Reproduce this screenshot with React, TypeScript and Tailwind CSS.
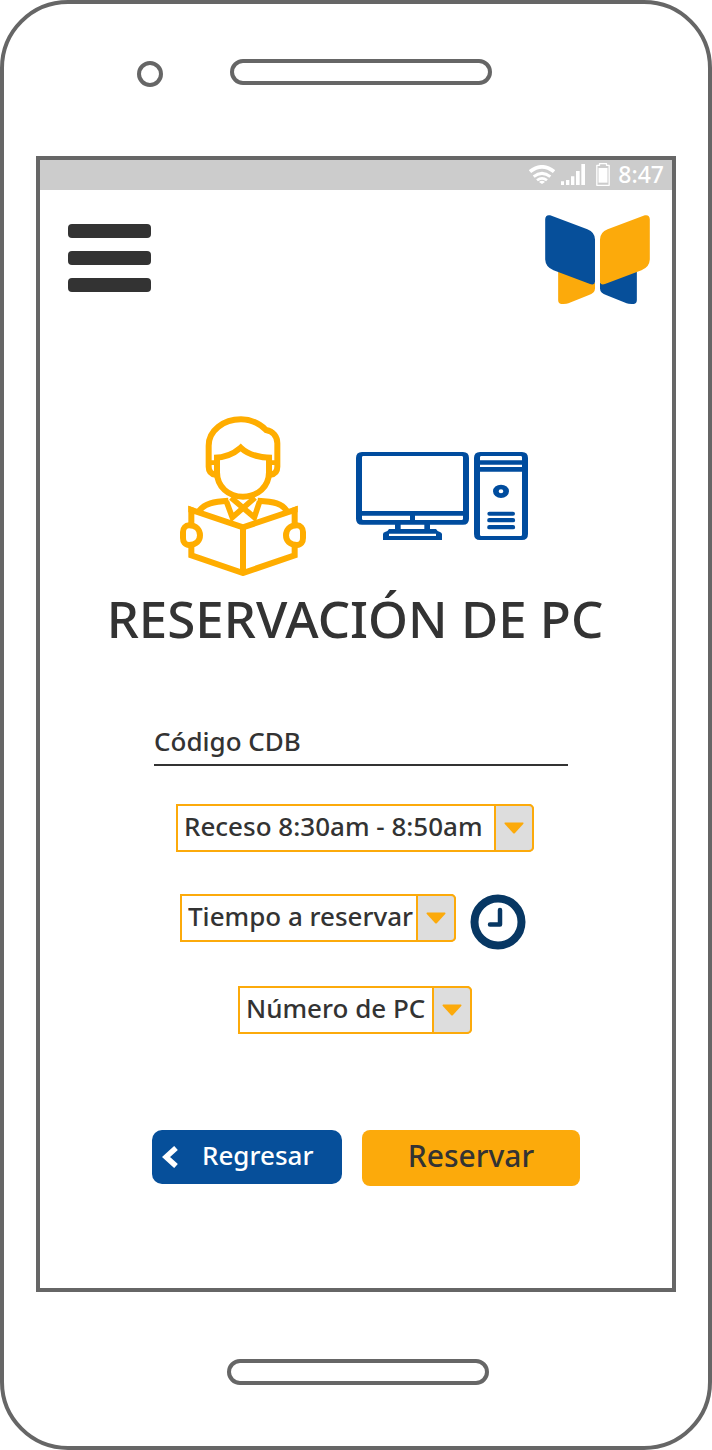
import React from "react";

function WifiIcon() {
  return (
    <svg viewBox="83 42 78 57" className="h-[19px] w-[26px]" fill="none" stroke="#fff" strokeWidth="11" aria-hidden="true">
      <path d="M86 62Q122 33 158 62" />
      <path d="M97 77Q122 57 147 77" strokeWidth="9" />
      <path d="M107 88Q122 76 137 88" strokeWidth="8" />
      <path d="M113 93Q122 86 131 93L122 99Z" fill="#fff" stroke="none" />
    </svg>
  );
}

function SignalIcon() {
  return (
    <svg viewBox="180 42 72 63" className="h-[21px] w-6" fill="#fff" aria-hidden="true">
      <path d="M180 94h9v11h-9zM195 90h10v15h-10zM210 79h10v26h-10zM225 63h11v42h-11zM241 42h11v63h-11z" />
    </svg>
  );
}

function BatteryIcon() {
  return (
    <svg viewBox="286 39 41 69" className="h-[23px] w-[14px]" aria-hidden="true">
      <path d="M296 41h21v5h8v60h-37V46h8z" fill="none" stroke="#fff" strokeWidth="4" strokeLinejoin="round" />
      <path d="M293 54h27v44h-27z" fill="#fff" />
    </svg>
  );
}

function LogoWing({ upper, lower }: { upper: string; lower: string }) {
  return (
    <>
      <path d="M174 360L285 398V415Q285 428 265 436L205 460Q200 462 190 462H183Q174 460 174 450Z" fill={lower} />
      <path d="M135 207Q136 192 150 195L262 237Q285 246 285 268V394Q284 406 270 402L160 360Q136 351 135 328Z" fill={upper} />
    </>
  );
}

function Logo() {
  return (
    <svg viewBox="135 194 315 268" className="h-[89px] w-[105px]" role="img" aria-label="Biblioteca">
      <LogoWing upper="#064f9a" lower="#fcaa0b" />
      <g transform="translate(585 0) scale(-1 1)">
        <LogoWing upper="#fcaa0b" lower="#064f9a" />
      </g>
    </svg>
  );
}

function ReaderIcon() {
  return (
    <svg viewBox="45 46 381 480" className="h-40 w-[127px]" fill="none" stroke="#ffad00" strokeWidth="18" aria-hidden="true">
      <path d="M152 222C138 220 131 212 131 198V135C131 90 175 56 228 56C258 56 283 68 303 88C325 92 337 108 337 128V198C337 212 330 220 316 222" />
      <path d="M156 163V215C156 258 190 288 234 288C278 288 312 258 312 215V163" />
      <path d="M147 171C180 171 205 160 227 141C250 163 285 171 321 171" />
      <path d="M138 186H156M312 186H330" strokeWidth="14" />
      <path d="M184 302L202 350L270 291M284 302L268 350L198 291" strokeWidth="17" />
      <path d="M103 330C120 308 145 303 190 300M278 300C330 303 350 308 365 330" />
      <path d="M79 376V328L234 380L389 328V376" />
      <path d="M70 315L88 322V335H70ZM398 315L380 322V335H398Z" fill="#ffad00" stroke="none" />
      <path d="M79 430V464L234 517L389 464V430M234 380V517" />
      <path d="M72 374C94 374 105 388 105 404C105 420 94 433 72 433C60 433 54 424 54 412V394C54 382 62 374 72 374Z" />
      <path d="M396 374C374 374 363 388 363 404C363 420 374 433 396 433C408 433 414 424 414 412V394C414 382 406 374 396 374Z" />
    </svg>
  );
}

function ComputerIcon() {
  return (
    <svg viewBox="48 39 516 264" className="h-[88px] w-[172px]" fill="#004c9e" fillRule="evenodd" aria-hidden="true">
      <path d="M66 39H369Q387 39 387 57V239Q387 257 369 257H66Q48 257 48 239V57Q48 39 66 39ZM70 51Q66 51 66 55V216H369V55Q369 51 365 51ZM66 230V239Q66 243 70 243H365Q369 243 369 239V230Z" />
      <path d="M210 228H225V245H210ZM165 255H182V272H165ZM253 255H270V272H253Z" />
      <path d="M147 270H288Q292 278 300 279Q306 281 306 286V303H129V286Q129 280 135 279Q143 278 147 270ZM147 284V291H288V284Z" />
      <path d="M420 39H546Q564 39 564 57V285Q564 303 546 303H420Q402 303 402 285V57Q402 39 420 39ZM424 51Q420 51 420 55V64H546V55Q546 51 542 51ZM420 77V84H546V77ZM420 98V287Q420 291 424 291H542Q546 291 546 287V98Z" />
      <path d="M483 137A24 20 0 1 1 483 177A24 20 0 1 1 483 137ZM483 151A7 6 0 1 0 483 163A7 6 0 1 0 483 151Z" />
      <path d="M448 218H519A6 6 0 0 1 519 230H448A6 6 0 0 1 448 218ZM448 237H519A6 6 0 0 1 519 250H448A6 6 0 0 1 448 237ZM448 258H519A6 6 0 0 1 519 271H448A6 6 0 0 1 448 258Z" />
    </svg>
  );
}

function ClockIcon() {
  return (
    <svg viewBox="0 0 56 56" className="size-14" fill="none" stroke="#073763" aria-hidden="true">
      <circle cx="28" cy="28" r="23.5" strokeWidth="8" />
      <path d="M30 16V30.5H20" strokeWidth="4.5" strokeLinecap="round" strokeLinejoin="round" />
    </svg>
  );
}

function Dropdown({ label, width }: { label: string; width: string }) {
  return (
    <div className={`relative h-12 ${width}`}>
      <select
        aria-label={label}
        className="size-full appearance-none rounded-r-[5px] border-2 border-[#fcaa0b] bg-white pr-10 pb-1 pl-1.5"
      >
        <option>{label}</option>
      </select>
      <span className="pointer-events-none absolute inset-y-0 right-0 flex w-10 items-center justify-center rounded-r-[5px] border-2 border-[#fcaa0b] bg-[#ddd]">
        <svg viewBox="0 0 20 12" className="h-3 w-5" fill="#fcaa0b" aria-hidden="true">
          <path d="M1 0.5H19Q20 1 19.2 2L11 11Q10 12 9 11L0.8 2Q0 1 1 0.5Z" />
        </svg>
      </span>
    </div>
  );
}

export default function App() {
  return (
    <div className="flex min-h-screen flex-col rounded-[68px] border-4 border-[#666] bg-white font-['Noto_Sans',sans-serif] text-[26px] leading-9 font-medium text-[#333]">
      <div className="flex justify-center pt-[55px] pr-[84px] pb-[69px]">
        <div className="flex h-7 gap-[67px]">
          <span className="size-[26px] self-end rounded-full border-4 border-[#666]" />
          <span className="h-[26px] w-[262px] rounded-full border-4 border-[#666]" />
        </div>
      </div>

      <div className="mx-8 flex flex-1 flex-col border-4 border-[#666]">
        <div className="flex h-[30px] items-center justify-end bg-[#ccc] pr-2 pb-0.5 text-[23px] text-white">
          <WifiIcon />
          <span className="ml-1.5">
            <SignalIcon />
          </span>
          <span className="ml-[11px]">
            <BatteryIcon />
          </span>
          <time className="ml-2">8:47</time>
        </div>

        <header className="flex items-start justify-between pt-[25px] pr-[22px] pl-7">
          <button type="button" aria-label="Menú" className="mt-[9px] flex w-[83px] flex-col gap-[13px]">
            <span className="h-[14px] w-full rounded bg-[#333]" />
            <span className="h-[14px] w-full rounded bg-[#333]" />
            <span className="h-[14px] w-full rounded bg-[#333]" />
          </button>
          <Logo />
        </header>

        <main className="flex flex-col items-center pt-28 pr-0.5 pb-20">
          <div className="flex items-center gap-[49px] pr-0.5">
            <ReaderIcon />
            <ComputerIcon />
          </div>
          <h1 className="mt-3 text-[51px] leading-[60px] whitespace-nowrap">RESERVACIÓN DE PC</h1>

          <form className="flex flex-col items-center" onSubmit={(event) => event.preventDefault()}>
            <div className="mt-[74px] pl-3">
              <input
                type="text"
                aria-label="Código CDB"
                placeholder="Código CDB"
                className="h-11 w-[414px] border-b-2 border-[#333] pb-1 outline-none placeholder:text-[#333] placeholder:opacity-100"
              />
            </div>
            <div className="mt-[38px]">
              <Dropdown label="Receso 8:30am - 8:50am" width="w-[358px]" />
            </div>
            <div className="mt-[42px] flex items-start gap-[14px] pr-1">
              <Dropdown label="Tiempo a reservar" width="w-[276px]" />
              <ClockIcon />
            </div>
            <div className="mt-9">
              <Dropdown label="Número de PC" width="w-[234px]" />
            </div>
            <div className="mt-24 flex items-start gap-5 pl-[22px]">
              <button
                type="button"
                className="flex h-[54px] w-[190px] items-center gap-6 rounded-[10px] bg-[#064f9a] pl-[10px] text-white"
              >
                <svg viewBox="0 0 16 22" className="h-[22px] w-4" fill="none" stroke="#fff" strokeWidth="5.5" aria-hidden="true">
                  <path d="M14 2L4 11L14 20" />
                </svg>
                <span className="pb-1">Regresar</span>
              </button>
              <button type="submit" className="h-14 w-[218px] rounded-lg bg-[#fcaa0b] pb-1 text-[30px]">
                Reservar
              </button>
            </div>
          </form>
        </main>
      </div>

      <div className="flex justify-center pt-[67px] pb-[61px] pl-1">
        <span className="h-[26px] w-[262px] rounded-full border-4 border-[#666]" />
      </div>
    </div>
  );
}
